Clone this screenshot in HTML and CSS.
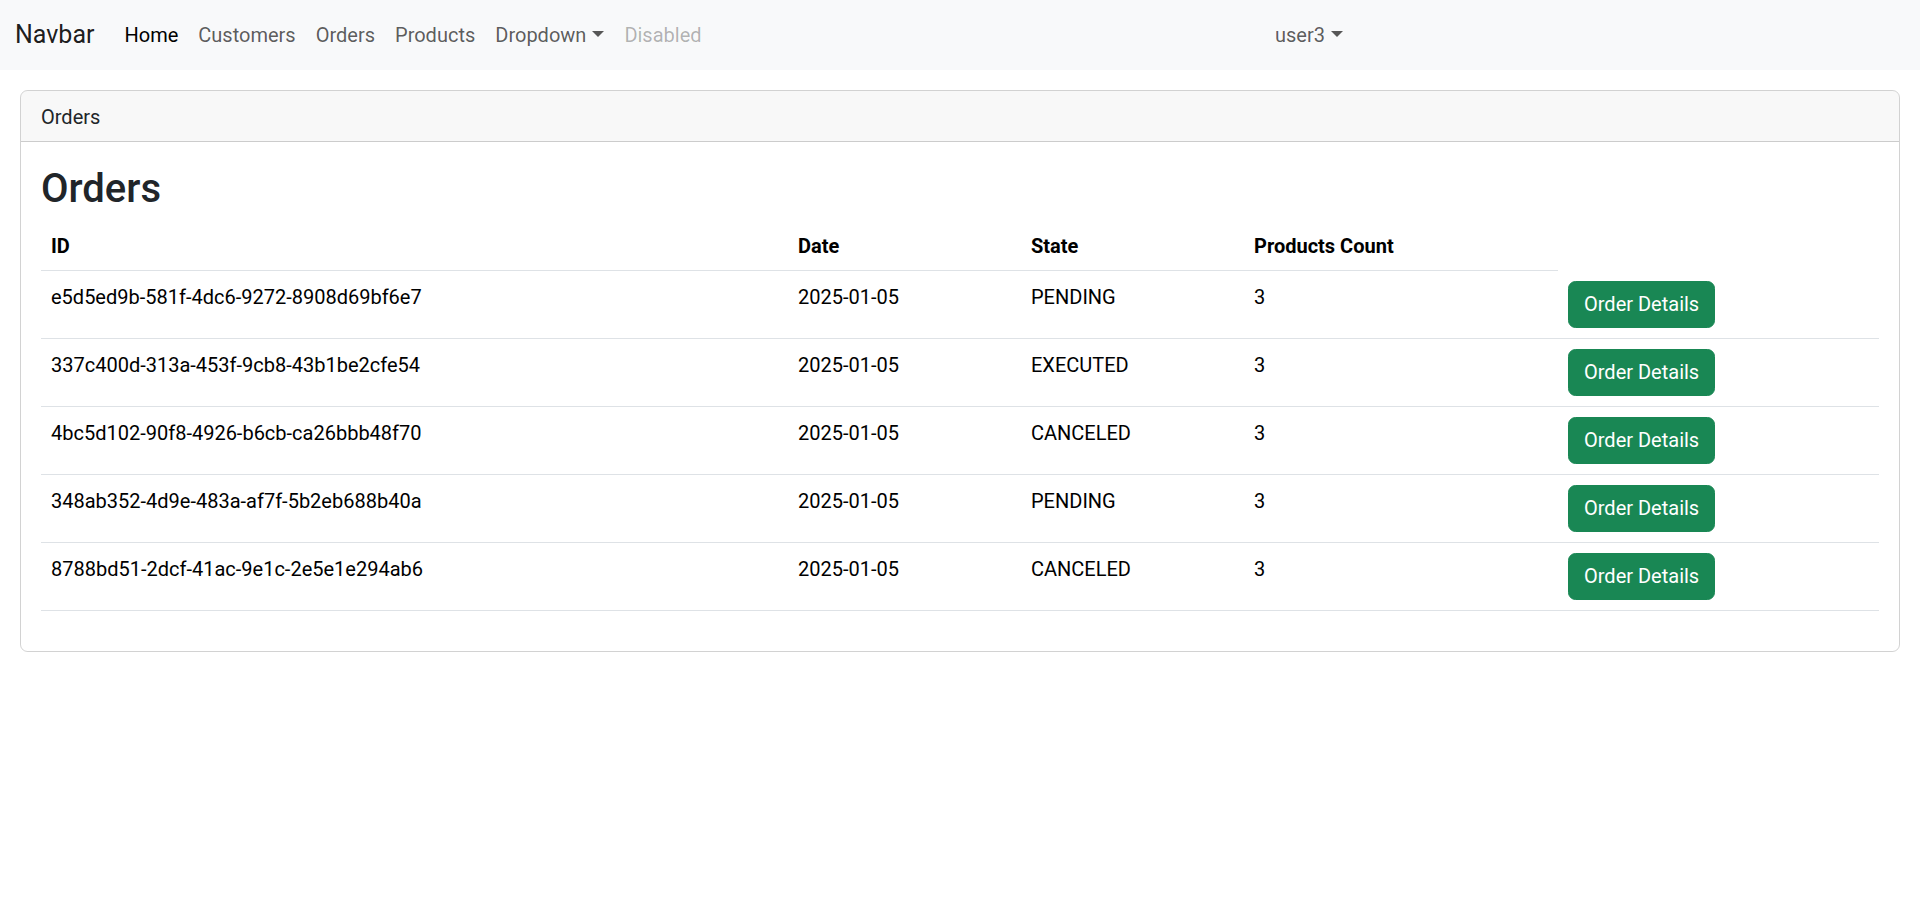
FILE: index.html
```html
<!DOCTYPE html>
<html lang="en">
<head>
<meta charset="utf-8">
<title>Orders</title>
<link rel="stylesheet" href="styles.css">
</head>
<body>
<nav class="navbar">
  <a class="navbar-brand" href="#">Navbar</a>
  <div class="navbar-collapse">
    <ul class="navbar-nav">
      <li><a class="nav-link active" href="#">Home</a></li>
      <li><a class="nav-link" href="#">Customers</a></li>
      <li><a class="nav-link" href="#">Orders</a></li>
      <li><a class="nav-link" href="#">Products</a></li>
      <li><a class="nav-link dropdown-toggle" href="#">Dropdown</a></li>
      <li><a class="nav-link disabled" href="#">Disabled</a></li>
    </ul>
    <div class="navbar-user">
      <a class="nav-link dropdown-toggle" href="#">user3</a>
    </div>
  </div>
</nav>

<main class="page">
  <div class="card">
    <div class="card-header">Orders</div>
    <div class="card-body">
      <h2 class="title">Orders</h2>
      <table class="table">
        <colgroup>
          <col class="col-id">
          <col class="col-date">
          <col class="col-state">
          <col class="col-count">
          <col class="col-action">
        </colgroup>
        <thead>
          <tr><th>ID</th><th>Date</th><th>State</th><th>Products Count</th></tr>
        </thead>
        <tbody>
          <tr><td>e5d5ed9b-581f-4dc6-9272-8908d69bf6e7</td><td>2025-01-05</td><td>PENDING</td><td>3</td><td><a class="btn" href="#">Order Details</a></td></tr>
          <tr><td>337c400d-313a-453f-9cb8-43b1be2cfe54</td><td>2025-01-05</td><td>EXECUTED</td><td>3</td><td><a class="btn" href="#">Order Details</a></td></tr>
          <tr><td>4bc5d102-90f8-4926-b6cb-ca26bbb48f70</td><td>2025-01-05</td><td>CANCELED</td><td>3</td><td><a class="btn" href="#">Order Details</a></td></tr>
          <tr><td>348ab352-4d9e-483a-af7f-5b2eb688b40a</td><td>2025-01-05</td><td>PENDING</td><td>3</td><td><a class="btn" href="#">Order Details</a></td></tr>
          <tr><td>8788bd51-2dcf-41ac-9e1c-2e5e1e294ab6</td><td>2025-01-05</td><td>CANCELED</td><td>3</td><td><a class="btn" href="#">Order Details</a></td></tr>
        </tbody>
      </table>
    </div>
  </div>
</main>
</body>
</html>
```

FILE: styles.css
```css
* { box-sizing: border-box; }

html, body {
  margin: 0;
  padding: 0;
}

body {
  font-family: Roboto, "Liberation Sans", sans-serif;
  font-size: 20px;
  line-height: 30px;
  color: #212529;
  background: #fff;
}

a { text-decoration: none; }

/* Navbar */
.navbar {
  display: flex;
  align-items: center;
  height: 70px;
  padding: 10px 15px;
  background: #f8f9fa;
}

.navbar-brand {
  font-size: 25px;
  line-height: 37.5px;
  padding: 6.25px 0;
  margin-right: 20px;
  color: rgba(0, 0, 0, 0.9);
}

.navbar-collapse {
  display: flex;
  align-items: center;
  flex: 1;
}

.navbar-nav {
  display: flex;
  list-style: none;
  margin: 0;
  padding: 0;
  flex: 1;
}

.nav-link {
  display: block;
  padding: 10px;
  color: rgba(0, 0, 0, 0.65);
}

.nav-link.active { color: rgba(0, 0, 0, 1); }
.nav-link.disabled { color: rgba(0, 0, 0, 0.3); }

.dropdown-toggle::after {
  content: "";
  display: inline-block;
  margin-left: 0.3em;
  vertical-align: 0.255em;
  border-top: 0.3em solid;
  border-right: 0.3em solid transparent;
  border-left: 0.3em solid transparent;
  border-bottom: 0;
}

.navbar-user {
  margin-right: 552px;
}

/* Page */
.page {
  padding: 20px 20px;
}

.card {
  border: 1px solid rgba(0, 0, 0, 0.175);
  border-radius: 7.5px;
  overflow: hidden;
}

.card-header {
  padding: 11px 20px 9px;
  background: rgba(33, 37, 41, 0.03);
  border-bottom: 1px solid rgba(0, 0, 0, 0.175);
  color: #212529;
}

.card-body {
  padding: 20px;
}

.title {
  margin: 0 0 10px;
  padding-top: 6px;
  font-size: 40px;
  line-height: 42px;
  font-weight: 500;
  color: #212529;
}

.table {
  width: 100%;
  border-collapse: collapse;
  table-layout: fixed;
  margin-bottom: 20px;
  color: #000;
  vertical-align: top;
}

.col-id { width: 747px; }
.col-date { width: 233px; }
.col-state { width: 223px; }
.col-count { width: 314px; }
.col-action { width: 321px; }

.table th,
.table td {
  padding: 11px 10px 9px;
  text-align: left;
  border-bottom: 1px solid #dee2e6;
  vertical-align: top;
}

.table td:last-child {
  padding: 10px;
}

.table th { font-weight: 700; }

.btn {
  display: inline-block;
  padding: 7.5px 15px;
  border: 1px solid #198754;
  border-radius: 7.5px;
  background: #198754;
  color: #fff;
  line-height: 30px;
}
```
